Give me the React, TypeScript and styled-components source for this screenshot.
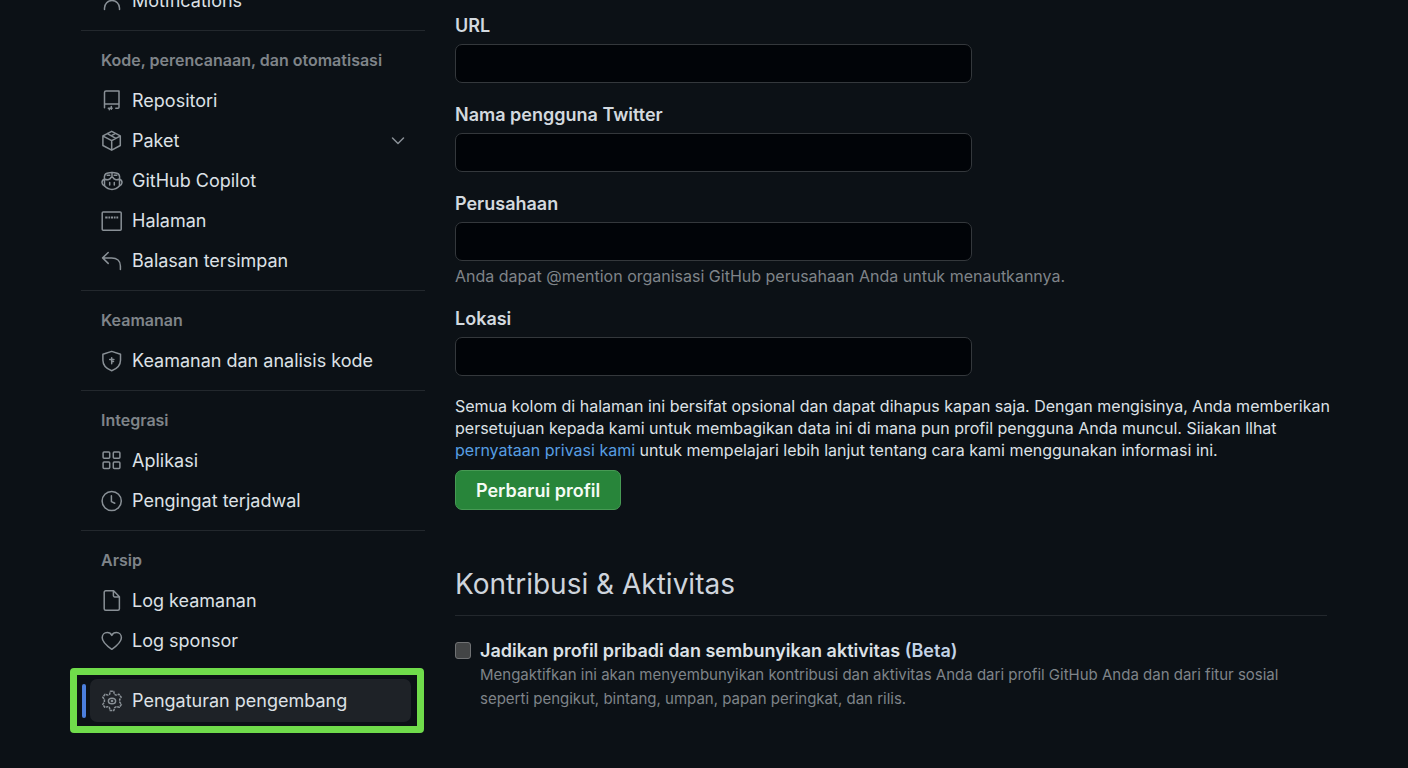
import React, { useId } from "react";
import styled, { createGlobalStyle } from "styled-components";

const GlobalStyle = createGlobalStyle`
  *, *::before, *::after { box-sizing: border-box; }
  body {
    margin: 0;
    background: #0c1116;
    color: #dde1e6;
    font-family: Inter, "Liberation Sans", sans-serif;
    font-size: 16px;
  }
`;

const Page = styled.div`
  display: flex;
  gap: 30px;
  height: 100vh;
  padding: 0 76px 0 81px;
  overflow-y: auto;
  scrollbar-width: none;
`;

/* The menu continues above the visible part of the page. */
const Sidebar = styled.nav`
  flex: 0 0 344px;
  margin-top: -19px;
`;

const NavSection = styled.section`
  padding-bottom: 9px;

  & + & {
    border-top: 1px solid #23282d;
    padding-top: 17px;
  }
`;

const NavHeading = styled.h3`
  margin: 0 0 9px;
  padding-left: 20px;
  color: #7f8489;
  font-size: 16px;
  font-weight: 600;
  line-height: 24px;
`;

const NavList = styled.ul`
  margin: 0;
  padding: 0;
  list-style: none;
`;

const NavLink = styled.a`
  display: flex;
  align-items: center;
  gap: 9px;
  height: 40px;
  padding: 0 20px;
  color: #dde1e6;
  font-size: 18px;
  line-height: 24px;
  text-decoration: none;
`;

const NavText = styled.span`
  flex: 1;
  white-space: nowrap;
`;

const Highlight = styled.div`
  display: flex;
  align-items: center;
  gap: 4px;
  margin: -2px 1px 0 -11px;
  padding: 4px 6px 4px 5px;
  border: 7px solid #70dc4b;
  border-radius: 4px;
`;

const ActiveBar = styled.span`
  width: 4px;
  height: 34px;
  border-radius: 2px;
  background: #4c7fdc;
`;

const ActiveLink = styled(NavLink)`
  flex: 1;
  height: 43px;
  padding: 0 11px;
  border-radius: 7px;
  background: #1e2227;
`;

const IconSvg = styled.svg`
  flex: none;
  fill: none;
  stroke: #899096;
  stroke-width: 1.5;
  stroke-linecap: round;
  stroke-linejoin: round;
`;

const Main = styled.main`
  flex: 1;
  min-width: 0;
  padding-top: 13px;
`;

const ProfileForm = styled.form`
  display: flex;
  flex-direction: column;
  align-items: flex-start;
  gap: 19px;
`;

const Field = styled.div`
  width: 100%;
`;

const FieldLabel = styled.label`
  display: block;
  margin-bottom: 6px;
  padding-top: 1px;
  color: #d3d9df;
  font-size: 18px;
  font-weight: 600;
  line-height: 24px;
`;

const TextInput = styled.input`
  display: block;
  width: 100%;
  max-width: 517px;
  height: 39px;
  padding: 0 12px;
  border: 1px solid #34383c;
  border-radius: 7px;
  background: #010408;
  color: #dde1e6;
  font: inherit;
`;

const Hint = styled.p`
  margin: 4px 0 0;
  color: #7f8489;
  line-height: 22px;
`;

const Submission = styled.div`
  display: flex;
  flex-direction: column;
  align-items: flex-start;
  gap: 9px;
`;

const Notice = styled.p`
  margin: 0;
  line-height: 22px;
`;

const TextLink = styled.a`
  color: #579ee2;
  text-decoration: none;
`;

const PrimaryButton = styled.button`
  height: 40px;
  padding: 0 20px;
  border: 1px solid #479a54;
  border-radius: 7px;
  background: #28853a;
  color: #f4fbf4;
  font-family: inherit;
  font-size: 18px;
  font-weight: 600;
`;

const SectionTitle = styled.h2`
  margin: 54px 5px 23px 0;
  padding-bottom: 11px;
  border-bottom: 1px solid #23282d;
  color: #ced4dc;
  font-size: 28px;
  font-weight: 400;
  line-height: 40px;
`;

const OptionRow = styled.div`
  display: flex;
  align-items: flex-start;
  gap: 9px;
  margin-right: 5px;
`;

const Checkbox = styled.input`
  flex: none;
  appearance: none;
  width: 16px;
  height: 17px;
  margin: 3px 0 0;
  border: 1px solid #707274;
  border-radius: 3px;
  background: #434546;
`;

const OptionLabel = styled.label`
  display: block;
  color: #dde1e6;
  font-size: 18px;
  font-weight: 600;
  line-height: 24px;
`;

const Beta = styled.span`
  color: #c3d3e6;
`;

const OptionText = styled.p`
  margin: 0;
  color: #7f8489;
  font-size: 15px;
  line-height: 24px;
`;

const Icon = ({ children }: { children: React.ReactNode }) => (
  <IconSvg width="22" height="22" viewBox="0 0 22 22" aria-hidden="true">
    {children}
  </IconSvg>
);

const PersonIcon = () => (
  <Icon>
    <circle cx="11" cy="5" r="4" />
    <path d="M3.500 19.500v-1.500a7.500 7.500 0 0 1 15 0v1.500" />
  </Icon>
);

const RepoIcon = () => (
  <Icon>
    <path d="M3.500 17.700V2.500A1.500 1.500 0 0 1 5 1h13v16.300a1 1 0 0 1-1 1h-2.200M3.500 13.900H18" />
    <path d="M7.300 18.200h3.800M10.300 16.400v2.800M8.300 19.400v.4" />
  </Icon>
);

const PackageIcon = () => (
  <Icon>
    <path d="M10.700 1.300 1.900 5.900v9.600l8.800 4.700 8.600-4.700V5.900ZM2.100 6.200l8.600 4.500 8.400-4.500M10.700 10.700v9.400M6.300 3.600l8.600 4.800M10.500 5.600l3.600-1.900" />
  </Icon>
);

const CopilotIcon = () => (
  <Icon>
    <path d="M3.500 9.200C3 5.900 3.700 3.900 6 3.200c1.900-.6 3.900-.8 5-.8s3.100.2 5 .8c2.300.7 3 2.700 2.500 6" />
    <path d="M11 2.600v4.200M3.800 9.200c2.600.9 5.600.6 6.300-1.900h1.800c.7 2.500 3.700 2.800 6.300 1.900" />
    <path d="M6.200 5.200h2.600M13.200 5.200h2.600" />
    <path d="M3.500 9.200C1.700 9.800 1 10.900 1 12.400c0 1.800 1 2.600 2.400 3.400M18.500 9.200c1.800.6 2.500 1.700 2.500 3.200 0 1.800-1 2.600-2.400 3.400" />
    <path d="M3.500 9.200v6.600c2 2.300 4.700 3.600 7.500 3.600s5.500-1.300 7.500-3.600V9.200M8.700 12.600v2.400M13.300 12.600v2.400" />
  </Icon>
);

const BrowserIcon = () => (
  <Icon>
    <rect x="1.200" y="1.900" width="19" height="18.400" rx="1" />
    <path d="M4.200 7.500h13" strokeWidth="2" strokeLinecap="butt" strokeDasharray="2.400 .8 1.600 .8" />
  </Icon>
);

const ReplyIcon = () => (
  <Icon>
    <path d="M7.200 2.500 1.600 7.900l5.600 5.500M2 7.900h8.600c5.400 0 8.800 3.200 8.800 8v3.500" />
  </Icon>
);

const ShieldIcon = () => (
  <Icon>
    <path d="M10.700 1.400 1.900 4.300v6c0 5 3.500 8.500 8.800 10.500 5.300-2 8.800-5.500 8.800-10.500v-6Z" />
    <path d="M8.700 9.400h4.200M10.700 7.800v6M10.700 11.600h1.800" />
  </Icon>
);

const AppsIcon = () => (
  <Icon>
    <rect x="2.100" y="1.900" width="6.600" height="6.400" rx="1" />
    <rect x="12.300" y="1.900" width="6.600" height="6.400" rx="1" />
    <rect x="2.100" y="12.100" width="6.600" height="6.400" rx="1" />
    <rect x="12.300" y="12.100" width="6.600" height="6.400" rx="1" />
  </Icon>
);

const ClockIcon = () => (
  <Icon>
    <circle cx="10.700" cy="11" r="9.600" />
    <path d="M10.400 5.800v5.800l3.400 1.600" />
  </Icon>
);

const FileIcon = () => (
  <Icon>
    <path d="M12.600.8H4.700a1.500 1.500 0 0 0-1.500 1.500v16.400a1.500 1.500 0 0 0 1.500 1.500h12.200a1.500 1.500 0 0 0 1.500-1.500V6.800ZM12.400 1v4.600a1.300 1.300 0 0 0 1.300 1.300h4.500" />
  </Icon>
);

const HeartIcon = () => (
  <Icon>
    <path d="M10.800 19.300C5.300 15.400 1.200 11.900 1.200 7.700c0-3 2.200-5.200 5-5.200 2 0 3.700 1 4.600 2.900.9-1.900 2.600-2.900 4.600-2.900 2.800 0 5 2.200 5 5.200 0 4.200-4.100 7.700-9.600 11.600Z" />
  </Icon>
);

const GearIcon = () => (
  <Icon>
    <path
      d="M9.300 1.300h3.400l.7 3 1.600.8 2.900-.8 2.300 2.900-1.500 2.300v2.600l1.700 2.300-2 2.900-3-.6-1.700.9-.9 3H9.200l-.8-3-1.600-.9-3 .6-2-2.900 1.600-2.300V9.500L1.800 7.200l2.300-2.900 2.900.8 1.600-.8Z"
      strokeDasharray="2.600 .7"
      strokeLinecap="butt"
    />
    <ellipse cx="11" cy="11" rx="3.600" ry="2.800" />
    <circle cx="11" cy="11" r=".6" />
  </Icon>
);

const Chevron = () => (
  <IconSvg width="14" height="14" viewBox="0 0 14 14" aria-hidden="true">
    <path d="M1.500 4 7 9.500 12.500 4" />
  </IconSvg>
);

type Item = { text: string; Glyph: React.ComponentType; expandable?: boolean };

const sections: { heading?: string; items: Item[] }[] = [
  { items: [{ text: "Motifications", Glyph: PersonIcon }] },
  {
    heading: "Kode, perencanaan, dan otomatisasi",
    items: [
      { text: "Repositori", Glyph: RepoIcon },
      { text: "Paket", Glyph: PackageIcon, expandable: true },
      { text: "GitHub Copilot", Glyph: CopilotIcon },
      { text: "Halaman", Glyph: BrowserIcon },
      { text: "Balasan tersimpan", Glyph: ReplyIcon },
    ],
  },
  {
    heading: "Keamanan",
    items: [{ text: "Keamanan dan analisis kode", Glyph: ShieldIcon }],
  },
  {
    heading: "Integrasi",
    items: [
      { text: "Aplikasi", Glyph: AppsIcon },
      { text: "Pengingat terjadwal", Glyph: ClockIcon },
    ],
  },
  {
    heading: "Arsip",
    items: [
      { text: "Log keamanan", Glyph: FileIcon },
      { text: "Log sponsor", Glyph: HeartIcon },
    ],
  },
];

function TextField({ label, hint }: { label: string; hint?: string }) {
  const id = useId();
  return (
    <Field>
      <FieldLabel htmlFor={id}>{label}</FieldLabel>
      <TextInput id={id} type="text" />
      {hint && <Hint>{hint}</Hint>}
    </Field>
  );
}

function Option({ label, text }: { label: React.ReactNode; text: string }) {
  const id = useId();
  return (
    <OptionRow>
      <Checkbox id={id} type="checkbox" />
      <div>
        <OptionLabel htmlFor={id}>{label}</OptionLabel>
        <OptionText>{text}</OptionText>
      </div>
    </OptionRow>
  );
}

export default function App() {
  return (
    <>
      <GlobalStyle />
      <Page>
        <Sidebar>
          {sections.map(({ heading, items }, index) => (
            <NavSection key={index}>
              {heading && <NavHeading>{heading}</NavHeading>}
              <NavList>
                {items.map(({ text, Glyph, expandable }) => (
                  <li key={text}>
                    <NavLink href="#">
                      <Glyph />
                      <NavText>{text}</NavText>
                      {expandable && <Chevron />}
                    </NavLink>
                  </li>
                ))}
              </NavList>
            </NavSection>
          ))}
          <Highlight>
            <ActiveBar />
            <ActiveLink href="#" aria-current="page">
              <GearIcon />
              <NavText>Pengaturan pengembang</NavText>
            </ActiveLink>
          </Highlight>
        </Sidebar>
        <Main>
          <ProfileForm>
            <TextField label="URL" />
            <TextField label="Nama pengguna Twitter" />
            <TextField
              label="Perusahaan"
              hint="Anda dapat @mention organisasi GitHub perusahaan Anda untuk menautkannya."
            />
            <TextField label="Lokasi" />
            <Submission>
              <Notice>
                Semua kolom di halaman ini bersifat opsional dan dapat dihapus kapan saja. Dengan
                mengisinya, Anda memberikan persetujuan kepada kami untuk membagikan data ini di
                mana pun profil pengguna Anda muncul. Siiakan llhat{" "}
                <TextLink href="#">pernyataan privasi kami</TextLink> untuk mempelajari lebih lanjut
                tentang cara kami menggunakan informasi ini.
              </Notice>
              <PrimaryButton type="button">Perbarui profil</PrimaryButton>
            </Submission>
          </ProfileForm>
          <SectionTitle>Kontribusi &amp; Aktivitas</SectionTitle>
          <Option
            label={
              <>
                Jadikan profil pribadi dan sembunyikan aktivitas <Beta>(Beta)</Beta>
              </>
            }
            text="Mengaktifkan ini akan menyembunyikan kontribusi dan aktivitas Anda dari profil GitHub Anda dan dari fitur sosial seperti pengikut, bintang, umpan, papan peringkat, dan rilis."
          />
        </Main>
      </Page>
    </>
  );
}
